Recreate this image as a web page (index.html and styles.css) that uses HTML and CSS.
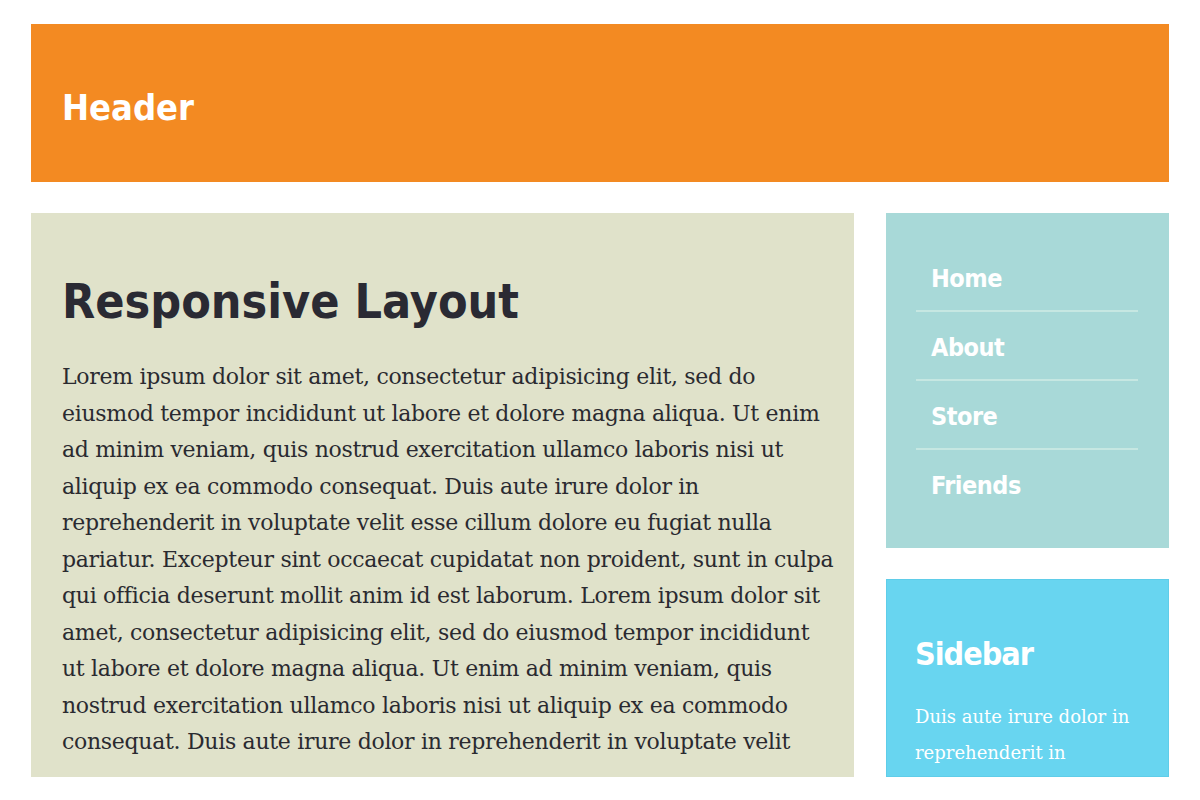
FILE: index.html
```html
<!DOCTYPE html>
<html>
<head>
<meta charset="utf-8">
<link rel="stylesheet" href="styles.css">
</head>
<body>
<div class="page">
  <header class="header"><h1 class="header-title">Header</h1></header>
  <div class="row">
    <main class="main">
      <h2 class="main-title">Responsive Layout</h2>
      <p class="main-text">Lorem ipsum dolor sit amet, consectetur adipisicing elit, sed do eiusmod tempor incididunt ut labore et dolore magna aliqua. Ut enim ad minim veniam, quis nostrud exercitation ullamco laboris nisi ut aliquip ex ea commodo consequat. Duis aute irure dolor in reprehenderit in voluptate velit esse cillum dolore eu fugiat nulla pariatur. Excepteur sint occaecat cupidatat non proident, sunt in culpa qui officia deserunt mollit anim id est laborum. Lorem ipsum dolor sit amet, consectetur adipisicing elit, sed do eiusmod tempor incididunt ut labore et dolore magna aliqua. Ut enim ad minim veniam, quis nostrud exercitation ullamco laboris nisi ut aliquip ex ea commodo consequat. Duis aute irure dolor in reprehenderit in voluptate velit</p>
    </main>
    <aside class="side">
      <nav class="nav">
        <a class="nav-item" href="#">Home</a>
        <a class="nav-item" href="#">About</a>
        <a class="nav-item" href="#">Store</a>
        <a class="nav-item" href="#">Friends</a>
      </nav>
      <section class="sidebar">
        <h3 class="sidebar-title">Sidebar</h3>
        <p class="sidebar-text">Duis aute irure dolor in reprehenderit in</p>
      </section>
    </aside>
  </div>
</div>
</body>
</html>
```

FILE: styles.css
```css
html, body {
  margin: 0;
  padding: 0;
  background: #ffffff;
  height: 800px;
  overflow: hidden;
}
.page {
  width: 1138px;
  margin-left: 31px;
  padding-top: 24px;
}
.header {
  height: 158px;
  background: #f38a22;
  display: flex;
  align-items: center;
  padding-left: 31px;
}
.header-title {
  margin: 0;
  color: #ffffff;
  font-family: "DejaVu Sans Condensed", "DejaVu Sans", sans-serif;
  font-stretch: condensed;
  font-weight: bold;
  font-size: 36px;
  padding-top: 8px;
}
.row {
  display: flex;
  gap: 32px;
  margin-top: 31px;
  height: 564px;
  overflow: hidden;
}
.main {
  width: 823px;
  background: #e0e2ca;
  padding: 45px 31px 0 31px;
  box-sizing: border-box;
  overflow: hidden;
}
.main-title {
  margin: 0 0 15px 0;
  color: #2a2a33;
  font-family: "DejaVu Sans Condensed", "DejaVu Sans", sans-serif;
  font-stretch: condensed;
  font-weight: bold;
  font-size: 48px;
  line-height: 86px;
}
.main-text {
  margin: 0;
  color: #2a2a30;
  font-family: "DejaVu Serif", serif;
  font-size: 22px;
  letter-spacing: -0.3px;
  line-height: 36.5px;
  width: 773px;
}
.side {
  width: 283px;
  display: flex;
  flex-direction: column;
  gap: 31px;
}
.nav {
  height: 335px;
  background: #a8d9d8;
  box-sizing: border-box;
  padding: 30px 31px 0 30px;
  display: flex;
  flex-direction: column;
}
.nav-item {
  display: block;
  height: 69px;
  box-sizing: border-box;
  padding-left: 15px;
  padding-top: 3px;
  line-height: 66px;
  color: #ffffff;
  text-decoration: none;
  font-family: "DejaVu Sans Condensed", "DejaVu Sans", sans-serif;
  font-stretch: condensed;
  font-weight: bold;
  font-size: 25px;
  letter-spacing: -0.5px;
  border-bottom: 2px solid #c6e7e2;
}
.nav-item:last-child {
  border-bottom: none;
}
.sidebar {
  flex: 1;
  background: #68d5f0;
  border: 1px solid #5fcde9;
  padding: 45px 28px 0 28px;
  overflow: hidden;
}
.sidebar-title {
  margin: 0 0 16px 0;
  color: #ffffff;
  font-family: "DejaVu Sans Condensed", "DejaVu Sans", sans-serif;
  font-stretch: condensed;
  font-weight: bold;
  font-size: 32px;
  letter-spacing: -1px;
  line-height: 58px;
}
.sidebar-text {
  margin: 0;
  color: #ffffff;
  font-family: "DejaVu Serif", serif;
  font-size: 18px;
  line-height: 36px;
}
```
